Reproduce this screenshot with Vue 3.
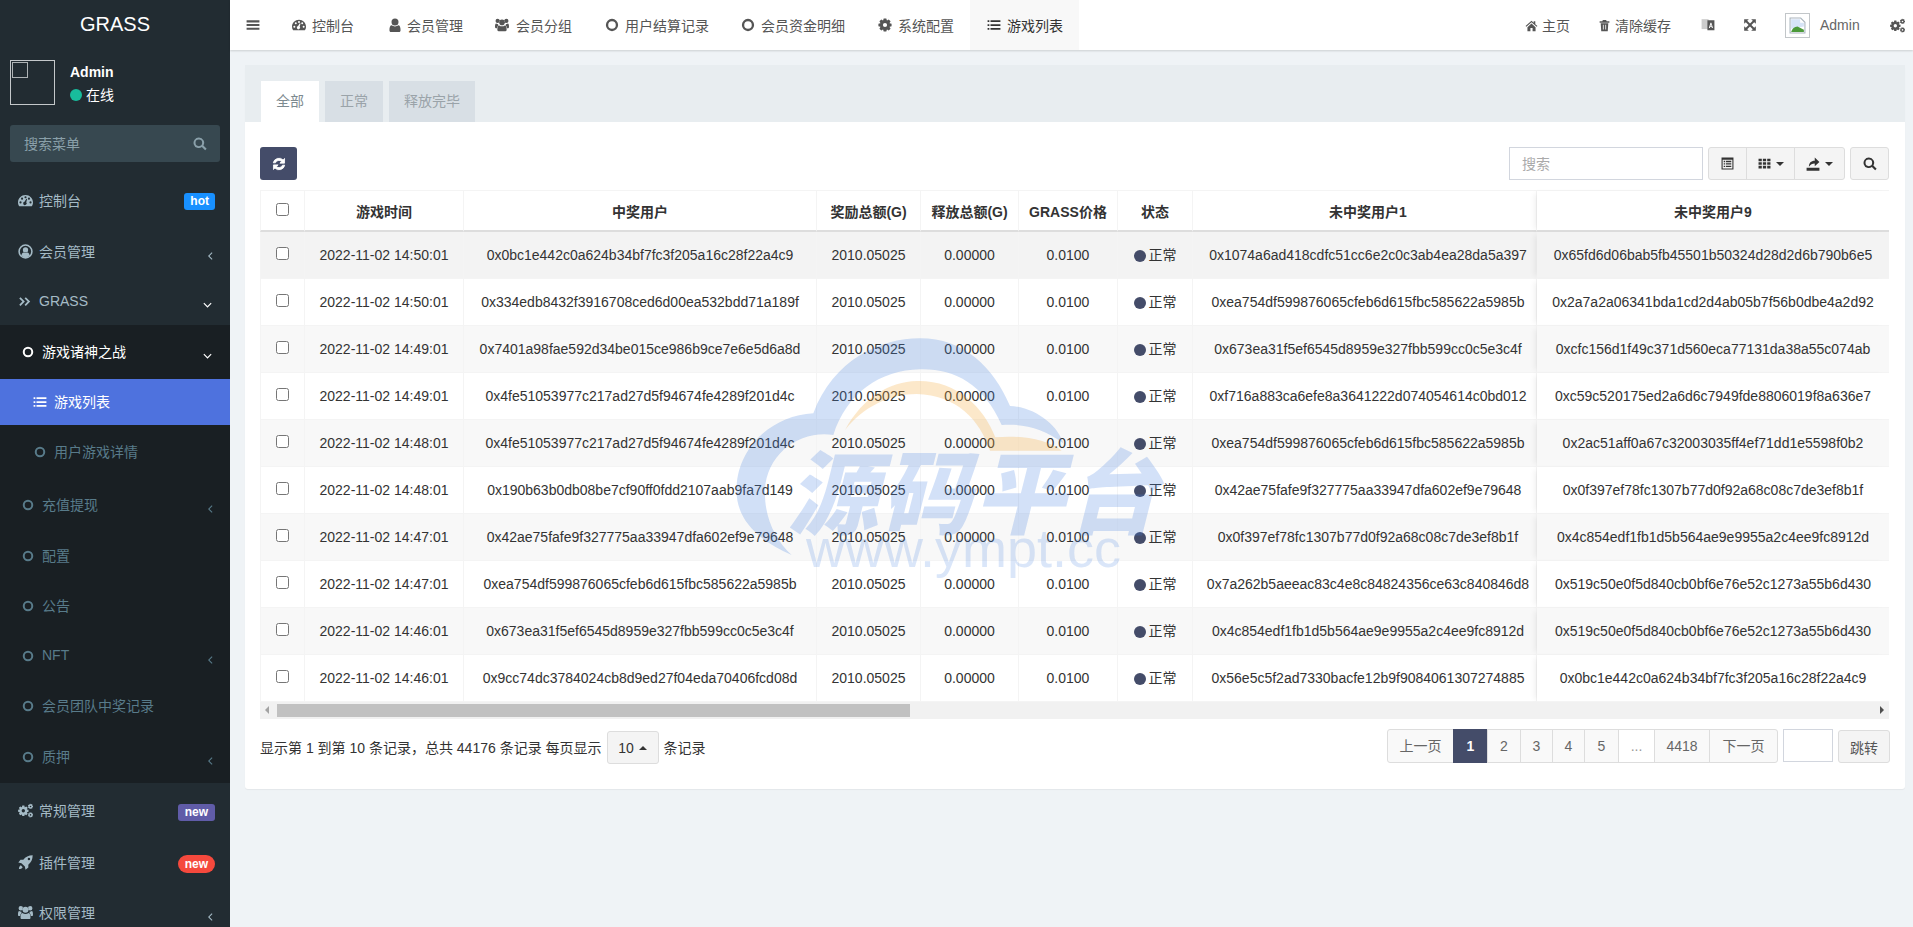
<script setup>
const circle = (x, y, r) => `M${x - r} ${y}a${r} ${r} 0 1 0 ${2 * r} 0a${r} ${r} 0 1 0 ${-2 * r} 0z`
const gear = (cx, cy, R, r, n, hole) => {
  let d = ''
  for (let i = 0; i < n; i++) {
    const a = (i / n) * Math.PI * 2
    const s = Math.PI / n
    const p = [[a - s * 0.95, r], [a - s * 0.5, R], [a + s * 0.5, R], [a + s * 0.95, r]]
    p.forEach(([t, q], j) => {
      d += `${i === 0 && j === 0 ? 'M' : 'L'}${(cx + Math.cos(t) * q).toFixed(2)} ${(cy + Math.sin(t) * q).toFixed(2)}`
    })
  }
  return d + 'z' + circle(cx, cy, hole)
}
const icons = {
  list: 'M1 4h3v3H1zM6 4h17v3H6zM1 10.5h3v3H1zM6 10.5h17v3H6zM1 17h3v3H1zM6 17h17v3H6z',
  ring: circle(12, 12, 10.5) + circle(12, 12, 6.5),
  dash: 'M12 3C5.4 3 0 8.4 0 15c0 2.5.7 4.5 2 6h20c1.3-1.5 2-3.5 2-6 0-6.6-5.4-12-12-12z' + circle(4, 15, 1.7) + circle(6.5, 9, 1.7) + circle(12, 6.8, 1.7) + circle(17.5, 9, 1.7) + circle(20, 15, 1.7) + 'M10.4 13.8l3-4.8 1.2.5-1.4 5.2a2.8 2.8 0 1 1-2.8-.9z',
  user: circle(12, 7, 6) + 'M5 24c-1.5 0-2.5-1-2.5-3 0-5 1-8.5 4-8.5 1.5 1.3 3.2 2 5.5 2s4-.7 5.5-2c3 0 4 3.500 4 8.500 0 2-1 3-2.500 3z',
  users: circle(4.5, 5, 3.6) + circle(19.5, 5, 3.6) + circle(12, 7.5, 4.8) + 'M6 22.500c-1.200 0-2-.8-2-2.200 0-4 .8-7.500 3.300-7.500 1.200 1 2.800 1.500 4.700 1.500s3.500-.5 4.700-1.500c2.500 0 3.300 3.500 3.300 7.500 0 1.400-.8 2.200-2 2.200zM3.500 17.500H1.500C.5 17.500 0 16.800 0 15.500 0 12 .5 9.500 2 9.500c1 .8 2 1.200 3.500 1.200-.2 1-.1 1.500.3 2.200-1.300.9-2.100 2.600-2.300 4.600zM20.500 17.500h2c1 0 1.500-.7 1.500-2 0-3.500-.5-6-2-6-1 .8-2 1.200-3.500 1.200.2 1 .1 1.500-.3 2.200 1.300.9 2.100 2.600 2.300 4.600z',
  gear: gear(12, 12, 11.5, 8.6, 8, 3.6),
  home: 'M12 3L1 13l1.500 1.500L12 6l9.500 8.500L23 13l-4-3.500V4h-3v2.800zM4.500 15v7.500h5.500v-6h4v6h5.500V15L12 8.200z',
  trash: 'M9 2h6l1 2h5v3H3V4h5zM5 8h14l-1 14.500H6zM9 10.500v9h1.500v-9zM13.500 10.500v9H15v-9z',
  lang: 'M11 4h12v17H11zM16.200 8l-2.700 9h1.800l.5-1.800h2.400l.5 1.800h1.800l-2.700-9zM17.200 10.800l.7 2.900h-1.500z',
  expand: 'M2 2h8L7.200 4.800 12 9.600l4.800-4.800L14 2h8v8l-2.800-2.800L14.400 12l4.800 4.800L22 14v8h-8l2.800-2.800L12 14.400l-4.800 4.800L10 22H2v-8l2.800 2.800L9.600 12 4.800 7.200 2 10z',
  gears: gear(8.5, 12.500, 8.500, 6.300, 8, 2.700) + gear(20, 5.500, 4.200, 3, 7, 1.300) + gear(20, 19, 4.200, 3, 7, 1.300),
  refresh: 'M21.500 2.500V10.500h-8l2.900-2.900A6.500 6.500 0 0 0 5.900 10H2.200A10 10 0 0 1 19 5z M2.500 21.500V13.500h8l-2.900 2.900A6.500 6.500 0 0 0 18.100 14h3.700A10 10 0 0 1 5 19z',
  search: 'M10 1a9 9 0 1 0 5.200 16.300l5.600 5.600 2.600-2.600-5.600-5.600A9 9 0 0 0 10 1zm0 3.300a5.700 5.700 0 1 1 0 11.400 5.700 5.700 0 0 1 0-11.400z',
  th: 'M1 3h6v5H1zM9 3h6v5H9zM17 3h6v5h-6zM1 9.500h6v5H1zM9 9.500h6v5H9zM17 9.500h6v5h-6zM1 16h6v5H1zM9 16h6v5H9zM17 16h6v5h-6z',
  listalt: 'M1 1h22v22H1zM3 5v16h18V5zM5 7h2.500v2.500H5zM9 7h10v2.500H9zM5 11.500h2.500V14H5zM9 11.500h10V14H9zM5 16h2.500v2.500H5zM9 16h10v2.500H9z',
  exp: 'M1 18.500h22v5H1zM5 16.500c0-6 3.500-10 10-10V1l8 7.500-8 7.500v-5c-4.500 0-7 1.500-10 5.500z',
  dbl: 'M4 5l7 7-7 7-2-2 5-5-5-5zM12.500 5l7 7-7 7-2-2 5-5-5-5z',
  rocket: 'M23.500.5c-6.500 0-11.500 2.500-15 7H4L.5 12l5 1 5.500 5.500 1 5 4.500-3.500v-4.500C21 12 23.500 7 23.500.5zM17.500 4.500a2 2 0 1 1 0 4 2 2 0 0 1 0-4zM4.500 16.500c-2 1-3 3.500-3 6 2.500 0 5-1 6-3z',
  ucircle: circle(12, 12, 11.500) + circle(12, 12, 9) + circle(12, 9.500, 4.200) + 'M5.500 18.500c.2-3 1.500-4.800 3.500-5 .9.600 1.900 1 3 1s2.100-.4 3-1c2 .2 3.300 2 3.500 5-1.700 1.600-4 2.500-6.500 2.500s-4.800-.9-6.500-2.500z',
  left: 'M15.500 4.500L8 12l7.500 7.500L17 18l-6-6 6-6z',
  down: 'M4.500 8.500L12 16l7.500-7.500L18 7l-6 6-6-6z'
}
const menu = [
  { t: '控制台', i: 'dash', c: 'it top h51', badge: 'hot' },
  { t: '会员管理', i: 'ucircle', c: 'it top h51', ch: 'left' },
  { t: 'GRASS', i: 'dbl', c: 'it top h48 latin', ch: 'down' }
]
const sub = [
  { t: '游戏诸神之战', i: 'ring', c: 'it sub h54 open', ch: 'down' },
  { t: '游戏列表', i: 'list', c: 'it deep h46 active' },
  { t: '用户游戏详情', i: 'ring', c: 'it deep h54' },
  { t: '充值提现', i: 'ring', c: 'it sub h52', ch: 'left' },
  { t: '配置', i: 'ring', c: 'it sub h50' },
  { t: '公告', i: 'ring', c: 'it sub h50' },
  { t: 'NFT', i: 'ring', c: 'it sub h50', ch: 'left' },
  { t: '会员团队中奖记录', i: 'ring', c: 'it sub h50' },
  { t: '质押', i: 'ring', c: 'it sub h52', ch: 'left' }
]
const menu2 = [
  { t: '常规管理', i: 'gears', c: 'it top h55', badge: 'new', bc: 'purple' },
  { t: '插件管理', i: 'rocket', c: 'it top h49', badge: 'new', bc: 'red' },
  { t: '权限管理', i: 'users', c: 'it top h51', ch: 'left' }
]
const nav = [
  { t: '控制台', i: 'dash', c: 'pl16' }, { t: '会员管理', i: 'user', c: 'pl18 g5' }, { t: '会员分组', i: 'users', c: 'pl16 g7' },
  { t: '用户结算记录', i: 'ring', c: 'pl17' }, { t: '会员资金明细', i: 'ring', c: 'pl16' }, { t: '系统配置', i: 'gear', c: 'pl17' },
  { t: '游戏列表', i: 'list', c: 'pl17 on' }
]
const rows = [
  ['2022-11-02 14:50:01', '0x0bc1e442c0a624b34bf7fc3f205a16c28f22a4c9', '0x1074a6ad418cdfc51cc6e2c0c3ab4ea28da5a397', '0x65fd6d06bab5fb45501b50324d28d2d6b790b6e5'],
  ['2022-11-02 14:50:01', '0x334edb8432f3916708ced6d00ea532bdd71a189f', '0xea754df599876065cfeb6d615fbc585622a5985b', '0x2a7a2a06341bda1cd2d4ab05b7f56b0dbe4a2d92'],
  ['2022-11-02 14:49:01', '0x7401a98fae592d34be015ce986b9ce7e6e5d6a8d', '0x673ea31f5ef6545d8959e327fbb599cc0c5e3c4f', '0xcfc156d1f49c371d560eca77131da38a55c074ab'],
  ['2022-11-02 14:49:01', '0x4fe51053977c217ad27d5f94674fe4289f201d4c', '0xf716a883ca6efe8a3641222d074054614c0bd012', '0xc59c520175ed2a6d6c7949fde8806019f8a636e7'],
  ['2022-11-02 14:48:01', '0x4fe51053977c217ad27d5f94674fe4289f201d4c', '0xea754df599876065cfeb6d615fbc585622a5985b', '0x2ac51aff0a67c32003035ff4ef71dd1e5598f0b2'],
  ['2022-11-02 14:48:01', '0x190b63b0db08be7cf90ff0fdd2107aab9fa7d149', '0x42ae75fafe9f327775aa33947dfa602ef9e79648', '0x0f397ef78fc1307b77d0f92a68c08c7de3ef8b1f'],
  ['2022-11-02 14:47:01', '0x42ae75fafe9f327775aa33947dfa602ef9e79648', '0x0f397ef78fc1307b77d0f92a68c08c7de3ef8b1f', '0x4c854edf1fb1d5b564ae9e9955a2c4ee9fc8912d'],
  ['2022-11-02 14:47:01', '0xea754df599876065cfeb6d615fbc585622a5985b', '0x7a262b5aeeac83c4e8c84824356ce63c840846d8', '0x519c50e0f5d840cb0bf6e76e52c1273a55b6d430'],
  ['2022-11-02 14:46:01', '0x673ea31f5ef6545d8959e327fbb599cc0c5e3c4f', '0x4c854edf1fb1d5b564ae9e9955a2c4ee9fc8912d', '0x519c50e0f5d840cb0bf6e76e52c1273a55b6d430'],
  ['2022-11-02 14:46:01', '0x9cc74dc3784024cb8d9ed27f04eda70406fcd08d', '0x56e5c5f2ad7330bacfe12b9f9084061307274885', '0x0bc1e442c0a624b34bf7fc3f205a16c28f22a4c9']
]
const pages = [
  { t: '上一页', c: 'pfirst' }, { t: '1', c: 'p1 cur' }, { t: '2', c: 'p2' }, { t: '3', c: 'p3' },
  { t: '4', c: 'p3' }, { t: '5', c: 'p5' }, { t: '...', c: 'pd dots' }, { t: '4418', c: 'pl' }, { t: '下一页', c: 'plast' }
]
</script>

<template>
  <div class="app">
    <aside class="side">
      <div class="logo">GRASS</div>
      <div class="panel">
        <div class="ava"><span class="ava-in"></span></div>
        <div class="who">
          <div class="name">Admin</div>
          <div class="state"><span class="dot"></span>在线</div>
        </div>
      </div>
      <div class="sbox">
        <span class="lbl">搜索菜单</span>
        <svg class="ic s14" viewBox="0 0 24 24"><path :d="icons.search" fill-rule="evenodd" /></svg>
      </div>
      <nav class="smenu">
        <div v-for="m in menu" :key="m.t" :class="m.c">
          <svg class="ic mi" viewBox="0 0 24 24"><path :d="icons[m.i]" fill-rule="evenodd" /></svg>
          <span class="lbl">{{ m.t }}</span>
          <span v-if="m.badge" class="badge">{{ m.badge }}</span>
          <svg v-if="m.ch" class="ic chev" viewBox="0 0 24 24"><path :d="icons[m.ch]" /></svg>
        </div>
        <div class="dark">
          <div v-for="m in sub" :key="m.t" :class="m.c">
            <svg class="ic mi" viewBox="0 0 24 24"><path :d="icons[m.i]" fill-rule="evenodd" /></svg>
            <span class="lbl">{{ m.t }}</span>
            <svg v-if="m.ch" class="ic chev" viewBox="0 0 24 24"><path :d="icons[m.ch]" /></svg>
          </div>
        </div>
        <div v-for="m in menu2" :key="m.t" :class="m.c">
          <svg class="ic mi" viewBox="0 0 24 24"><path :d="icons[m.i]" fill-rule="evenodd" /></svg>
          <span class="lbl">{{ m.t }}</span>
          <span v-if="m.badge" class="badge" :class="m.bc">{{ m.badge }}</span>
          <svg v-if="m.ch" class="ic chev" viewBox="0 0 24 24"><path :d="icons[m.ch]" /></svg>
        </div>
      </nav>
    </aside>

    <div class="main">
      <header class="head">
        <div class="burger">
          <svg class="ic s14" viewBox="0 0 24 24"><path d="M1 4h22v3.500H1zM1 10.300h22v3.500H1zM1 16.500h22V20H1z" /></svg>
        </div>
        <a v-for="n in nav" :key="n.t" class="nav" :class="n.c">
          <svg class="ic s14" viewBox="0 0 24 24"><path :d="icons[n.i]" fill-rule="evenodd" /></svg>
          <span>{{ n.t }}</span>
        </a>
        <div class="hright">
          <a class="r"><svg class="ic s13" viewBox="0 0 24 24"><path :d="icons.home" fill-rule="evenodd" /></svg>主页</a>
          <a class="r r-clear"><svg class="ic s13" viewBox="0 0 24 24"><path :d="icons.trash" fill-rule="evenodd" /></svg>清除缓存</a>
          <a class="r r-lang">
            <svg class="ic s14" viewBox="0 0 24 24"><path d="M1 2h12v17H1z" fill="#ccc" /><path :d="icons.lang" fill-rule="evenodd" /></svg>
          </a>
          <a class="r r-exp"><svg class="ic s14" viewBox="0 0 24 24"><path :d="icons.expand" /></svg></a>
          <span class="havatar">
            <svg viewBox="0 0 16 16" class="broken">
              <path d="M1 1h10l4 4v10H1z" fill="#fff" stroke="#a9b4bd" />
              <path d="M2 2h8.500v3.500H14V9L2 11z" fill="#d6e4f7" />
              <path d="M2 14c1-3 3-5 6-5l6 3v2z" fill="#4c9a3a" />
            </svg>
          </span>
          <a class="r r-admin">Admin</a>
          <a class="r r-gears"><svg class="ic s15" viewBox="0 0 24 24"><path :d="icons.gears" fill-rule="evenodd" /></svg></a>
        </div>
      </header>

      <section class="content">
        <div class="box">
          <div class="tabs">
            <a class="tab act">全部</a>
            <a class="tab">正常</a>
            <a class="tab wide">释放完毕</a>
          </div>
          <div class="bbody">
            <div class="tools">
              <button class="refresh">
                <svg class="ic s14" viewBox="0 0 24 24"><path :d="icons.refresh" /></svg>
              </button>
              <div class="tright">
                <input class="sinput" placeholder="搜索" />
                <div class="group">
                  <button class="gb g1"><svg class="ic s13" viewBox="0 0 24 24"><path :d="icons.listalt" fill-rule="evenodd" /></svg></button>
                  <button class="gb g2"><svg class="ic s13" viewBox="0 0 24 24"><path :d="icons.th" /></svg><i class="caret"></i></button>
                  <button class="gb g3"><svg class="ic s14" viewBox="0 0 24 24"><path :d="icons.exp" /></svg><i class="caret"></i></button>
                </div>
                <button class="gb g4"><svg class="ic s14" viewBox="0 0 24 24"><path :d="icons.search" fill-rule="evenodd" /></svg></button>
              </div>
            </div>

            <div class="twrap">
              <table class="tb">
                <colgroup>
                  <col class="c0" /><col class="c1" /><col class="c2" /><col class="c3" /><col class="c4" />
                  <col class="c5" /><col class="c6" /><col class="c7" /><col class="c8" />
                </colgroup>
                <thead>
                  <tr>
                    <th><input type="checkbox" class="cb" /></th>
                    <th>游戏时间</th><th>中奖用户</th><th>奖励总额(G)</th><th>释放总额(G)</th>
                    <th>GRASS价格</th><th>状态</th><th class="hid">未中奖用户1</th><th class="fx">未中奖用户9</th>
                  </tr>
                </thead>
                <tbody>
                  <tr v-for="(r, i) in rows" :key="i" :class="{ hov: i === 0 }">
                    <td><input type="checkbox" class="cb" /></td>
                    <td>{{ r[0] }}</td>
                    <td>{{ r[1] }}</td>
                    <td>2010.05025</td>
                    <td>0.00000</td>
                    <td>0.0100</td>
                    <td><span class="sdot"></span><span class="stx">正常</span></td>
                    <td class="hid">{{ r[2] }}</td>
                    <td class="fx">{{ r[3] }}</td>
                  </tr>
                </tbody>
              </table>
              <div class="hbar">
                <span class="arr al"></span>
                <span class="thumb"></span>
                <span class="arr ar"></span>
              </div>
            </div>

            <div class="pager">
              <div class="pinfo">
                <span>显示第 1 到第 10 条记录，总共 44176 条记录 每页显示</span>
                <button class="psize">10<i class="caret up"></i></button>
                <span>条记录</span>
              </div>
              <div class="pright">
                <ul class="plist">
                  <li v-for="p in pages" :key="p.t" :class="p.c">{{ p.t }}</li>
                </ul>
                <input class="jump" />
                <button class="go">跳转</button>
              </div>
            </div>
          </div>
        </div>
      </section>
    </div>

    <svg class="wm" viewBox="0 0 1500 810">
      <path class="wb" d="M275 705C150 650 105 580 110 500C115 380 220 285 340 280C400 120 540 55 660 55C790 55 880 140 930 258C1010 262 1075 320 1090 370C1030 325 970 310 905 315C850 190 760 145 660 148C540 150 440 220 400 345C300 330 200 400 195 510C192 590 225 660 275 705Z" />
      <path class="wo" d="M435 330C490 230 570 185 650 183C770 180 850 260 886 352C950 345 1040 355 1085 392L870 392C840 300 770 225 650 222C570 222 490 260 435 330Z" />
      <text class="wt" x="262" y="622">源码平台</text>
      <text class="wu" x="318" y="740">www.ympt.cc</text>
    </svg>
  </div>
</template>

<style>
html, body { margin: 0; padding: 0; overflow: hidden; background: #eff3f6; }
</style>

<style scoped>
* { box-sizing: border-box; }
.app {
  position: relative;
  display: flex;
  width: 1913px;
  height: 927px;
  overflow: hidden;
  font-family: "Liberation Sans", "Noto Sans CJK SC", sans-serif;
  font-size: 14px;
  color: #333;
  background: #eff3f6;
}
.ic { display: block; flex: none; fill: currentColor; }
.s13 { width: 13px; height: 13px; }
.s14 { width: 14px; height: 14px; }
.s15 { width: 15px; height: 15px; }

/* sidebar */
.side { width: 230px; flex: none; height: 927px; overflow: hidden; background: #222c32; color: #fff; }
.logo { height: 50px; line-height: 49px; text-align: center; font-size: 20px; color: #fff; }
.panel { display: flex; height: 75px; padding: 10px 10px 0; }
.ava { width: 45px; height: 45px; border: 1px solid #c4c8ca; padding: 1px; }
.ava-in { display: block; width: 16px; height: 16px; border: 1px solid #aeb3b5; }
.who { margin-left: 15px; padding-top: 3px; font-size: 13px; }
.name { font-weight: 700; font-size: 14px; line-height: 18px; }
.state { display: flex; align-items: center; margin-top: 5px; line-height: 18px; font-size: 14px; }
.dot { width: 12px; height: 12px; margin-right: 4px; border-radius: 50%; background: #18bc9c; }
.sbox {
  display: flex; align-items: center; justify-content: space-between;
  width: 210px; height: 37px; margin-left: 10px; padding: 0 13px 0 14px;
  border-radius: 3px; background: #374850; color: #8aa0aa; font-size: 14px;
}
.lbl { position: relative; top: -1px; }
.latin .lbl { top: 0; }
.smenu { margin-top: 13px; }
.it { position: relative; display: flex; align-items: center; }
.h46 { height: 46px; } .h48 { height: 48px; } .h49 { height: 49px; } .h50 { height: 50px; }
.h51 { height: 51px; } .h52 { height: 52px; } .h54 { height: 54px; } .h55 { height: 55px; }
.top { padding-left: 18px; color: #a5bbc6; }
.top .mi { width: 15px; height: 15px; margin-right: 6px; }
.dark { background: #191f23; }
.sub { padding-left: 22px; color: #587b8a; }
.sub .mi { width: 12px; height: 12px; margin-right: 8px; }
.sub.open { color: #fff; }
.deep { padding-left: 34px; color: #587b8a; }
.deep .mi { width: 12px; height: 12px; margin-right: 8px; }
.deep.active { padding-left: 33px; background: #4e72de; color: #fff; }
.deep.active .mi { width: 14px; height: 14px; margin-right: 7px; }
.chev { position: absolute; right: 14px; top: 50%; width: 12px; height: 12px; margin-top: -2px; }
.top .chev { color: #a5bbc6; }
.sub.open .chev, .h48 .chev { right: 16px; width: 13px; height: 13px; color: #fff; }
.badge {
  position: absolute; right: 15px; top: 18px; height: 17px; padding: 0 6px;
  border-radius: 3px; background: #1890ff; color: #fff;
  font-size: 12px; font-weight: 700; line-height: 17px;
}
.badge.purple { top: 21px; background: #605ca8; padding: 0 7px; }
.badge.red { top: 17px; height: 18px; line-height: 18px; border-radius: 9px; background: #f5493d; padding: 0 7px; }

/* header */
.main { flex: 1; min-width: 0; }
.head {
  display: flex; align-items: stretch; height: 50px; background: #fff;
  box-shadow: 0 1px 2px rgba(0, 0, 0, .15); position: relative; color: #555;
}
.burger { display: flex; align-items: center; width: 46px; padding-left: 16px; }
.nav { display: flex; align-items: center; gap: 6px; padding-right: 16px; }
.pl16 { padding-left: 16px; } .pl17 { padding-left: 17px; } .pl18 { padding-left: 18px; }
.g5 { gap: 5px; } .g7 { gap: 7px; }
.nav.on { background: #f8f8f8; color: #333; }
.hright { display: flex; align-items: center; margin-left: auto; }
.r { display: flex; align-items: center; gap: 4px; }
.r-clear { margin-left: 28px; }
.r-lang { margin-left: 30px; }
.r-exp { margin-left: 28px; }
.havatar { display: flex; align-items: center; justify-content: center; width: 25px; height: 25px; margin-left: 28px; border: 1px solid #c2c6c9; }
.broken { width: 17px; height: 17px; }
.r-admin { margin-left: 10px; width: 40px; color: #666; }
.r-gears { margin-left: 30px; margin-right: 8px; }

/* content */
.content { padding: 15px 8px 0 15px; }
.box { height: 724px; background: #fff; border-radius: 3px; box-shadow: 0 1px 1px rgba(0, 0, 0, .05); }
.tabs { display: flex; gap: 6px; height: 57px; padding: 16px 0 0 16px; background: #e8edf0; }
.tab { width: 58px; height: 41px; line-height: 41px; text-align: center; background: #d8dfe5; color: #9aa3a9; }
.tab.wide { width: 86px; }
.tab.act { background: #fff; color: #7d8a90; }
.bbody { padding: 25px 16px 0 15px; }
.tools { display: flex; justify-content: space-between; height: 33px; }
.refresh {
  display: flex; align-items: center; justify-content: center; width: 37px; height: 33px; padding: 0;
  border: 0; border-radius: 3px; background: #444c69; color: #fff;
}
.refresh path { stroke: currentColor; stroke-width: 1.4; }
.tright { display: flex; }
.sinput {
  width: 194px; height: 33px; margin-right: 5px; padding: 0 12px; border: 1px solid #d2d6de;
  font: 14px "Liberation Sans", "Noto Sans CJK SC", sans-serif; outline: 0;
}
.sinput::placeholder { color: #aaa; }
.group { display: flex; }
.gb {
  display: flex; align-items: center; justify-content: center; gap: 5px; height: 33px; padding: 0;
  border: 1px solid #ddd; background: #f4f4f4; color: #333;
}
.g1 { width: 39px; border-radius: 3px 0 0 3px; }
.g2 { width: 49px; margin-left: -1px; }
.g3 { width: 51px; margin-left: -1px; border-radius: 0 3px 3px 0; }
.g4 { width: 39px; margin-left: 5px; border-radius: 3px; }
.caret { display: block; width: 0; height: 0; border: 4px solid transparent; border-top-color: currentColor; border-bottom: 0; }
.caret.up { border-top: 0; border-bottom: 4px solid currentColor; margin-left: 5px; }

/* table */
.twrap { position: relative; margin-top: 10px; width: 1629px; border-top: 1px solid #f4f4f4; }
.tb { width: 1629px; table-layout: fixed; border-collapse: separate; border-spacing: 0; }
.c0 { width: 45px; } .c1 { width: 159px; } .c2 { width: 353px; } .c3 { width: 104px; } .c4 { width: 98px; }
.c5 { width: 99px; } .c6 { width: 75px; } .c7 { width: 344px; } .c8 { width: 352px; }
th, td { padding: 0; text-align: center; vertical-align: middle; white-space: nowrap; overflow: visible; font-size: 14px; }
th { height: 41px; font-weight: 700; border-bottom: 2px solid #ddd; border-right: 1px solid #f4f4f4; background: #fff; }
td { height: 47px; border-bottom: 1px solid #f4f4f4; border-right: 1px solid #f4f4f4; }
tr:nth-child(odd) td { background: #f8f8f8; }
tr.hov td { background: #f3f3f3 !important; }
tr:nth-child(even) td { background: #fff; }
th:first-child, td:first-child { border-left: 1px solid #f4f4f4; }
.cb { display: block; width: 13px; height: 13px; margin: -3px auto 0; }
.hid { padding-left: 7px; }
.fx { position: relative; border-right: 0; box-shadow: -5px 0 6px -3px rgba(0, 0, 0, .07); }
.sdot { display: inline-block; width: 12px; height: 12px; margin-right: 3px; border-radius: 50%; background: #444c69; vertical-align: -1px; }
.stx { position: relative; top: -1px; }
.hbar { position: relative; display: flex; align-items: center; height: 17px; background: #f1f1f1; }
.thumb { position: absolute; left: 17px; top: 2px; width: 633px; height: 13px; background: #c1c1c1; }
.arr { position: absolute; top: 4px; width: 0; height: 0; border: 4px solid transparent; }
.al { left: 5px; border-right-color: #a3a3a3; border-left: 0; }
.ar { right: 5px; border-left-color: #505050; border-right: 0; }

/* pager */
.pager { display: flex; justify-content: space-between; margin: 10px -1px 0 0; }
.pinfo { display: flex; align-items: center; gap: 5px; height: 35px; font-size: 14px; }
.psize {
  display: flex; align-items: center; justify-content: center; width: 52px; height: 33px; margin: 2px 0 0; padding: 0;
  border: 1px solid #ddd; border-radius: 3px; background: #f4f4f4; color: #333; font: 14px "Liberation Sans", sans-serif;
}
.pright { display: flex; align-items: flex-start; }
.plist { display: flex; height: 34px; margin: 0; padding: 0; list-style: none; }
.plist li {
  height: 34px; line-height: 32px; text-align: center; border: 1px solid #ddd; margin-left: -1px;
  background: #f9f9f9; color: #666;
}
.plist .pfirst { width: 67px; margin-left: 0; border-radius: 3px 0 0 3px; }
.p1 { width: 35px; } .p2 { width: 34px; } .p3 { width: 33px; } .p5 { width: 35px; } .pd { width: 37px; } .pl { width: 56px; }
.plist .plast { width: 69px; border-radius: 0 3px 3px 0; }
.plist .cur { background: #444c69; border-color: #444c69; color: #fff; font-weight: 700; }
.plist .dots { background: #fff; color: #999; }
.jump { width: 50px; height: 33px; margin-left: 5px; border: 1px solid #d2d6de; outline: 0; }
.go {
  width: 52px; height: 33px; margin: 1px 0 0 5px; padding: 0; border: 1px solid #ddd; border-radius: 3px;
  background: #f4f4f4; color: #555; font: 14px "Liberation Sans", "Noto Sans CJK SC", sans-serif;
}

/* watermark */
.wm { position: absolute; left: 700px; top: 320px; width: 500px; height: 270px; pointer-events: none; }
.wb { fill: rgba(70, 130, 225, .25); }
.wo { fill: rgba(245, 170, 60, .27); }
.wt {
  fill: rgba(70, 130, 225, .24); font-family: "Noto Sans CJK SC", sans-serif; font-size: 272px;
  font-weight: 900; font-style: italic; letter-spacing: 8px;
}
.wu { fill: rgba(70, 130, 225, .2); font-family: "Liberation Sans", sans-serif; font-size: 162px; }
</style>
